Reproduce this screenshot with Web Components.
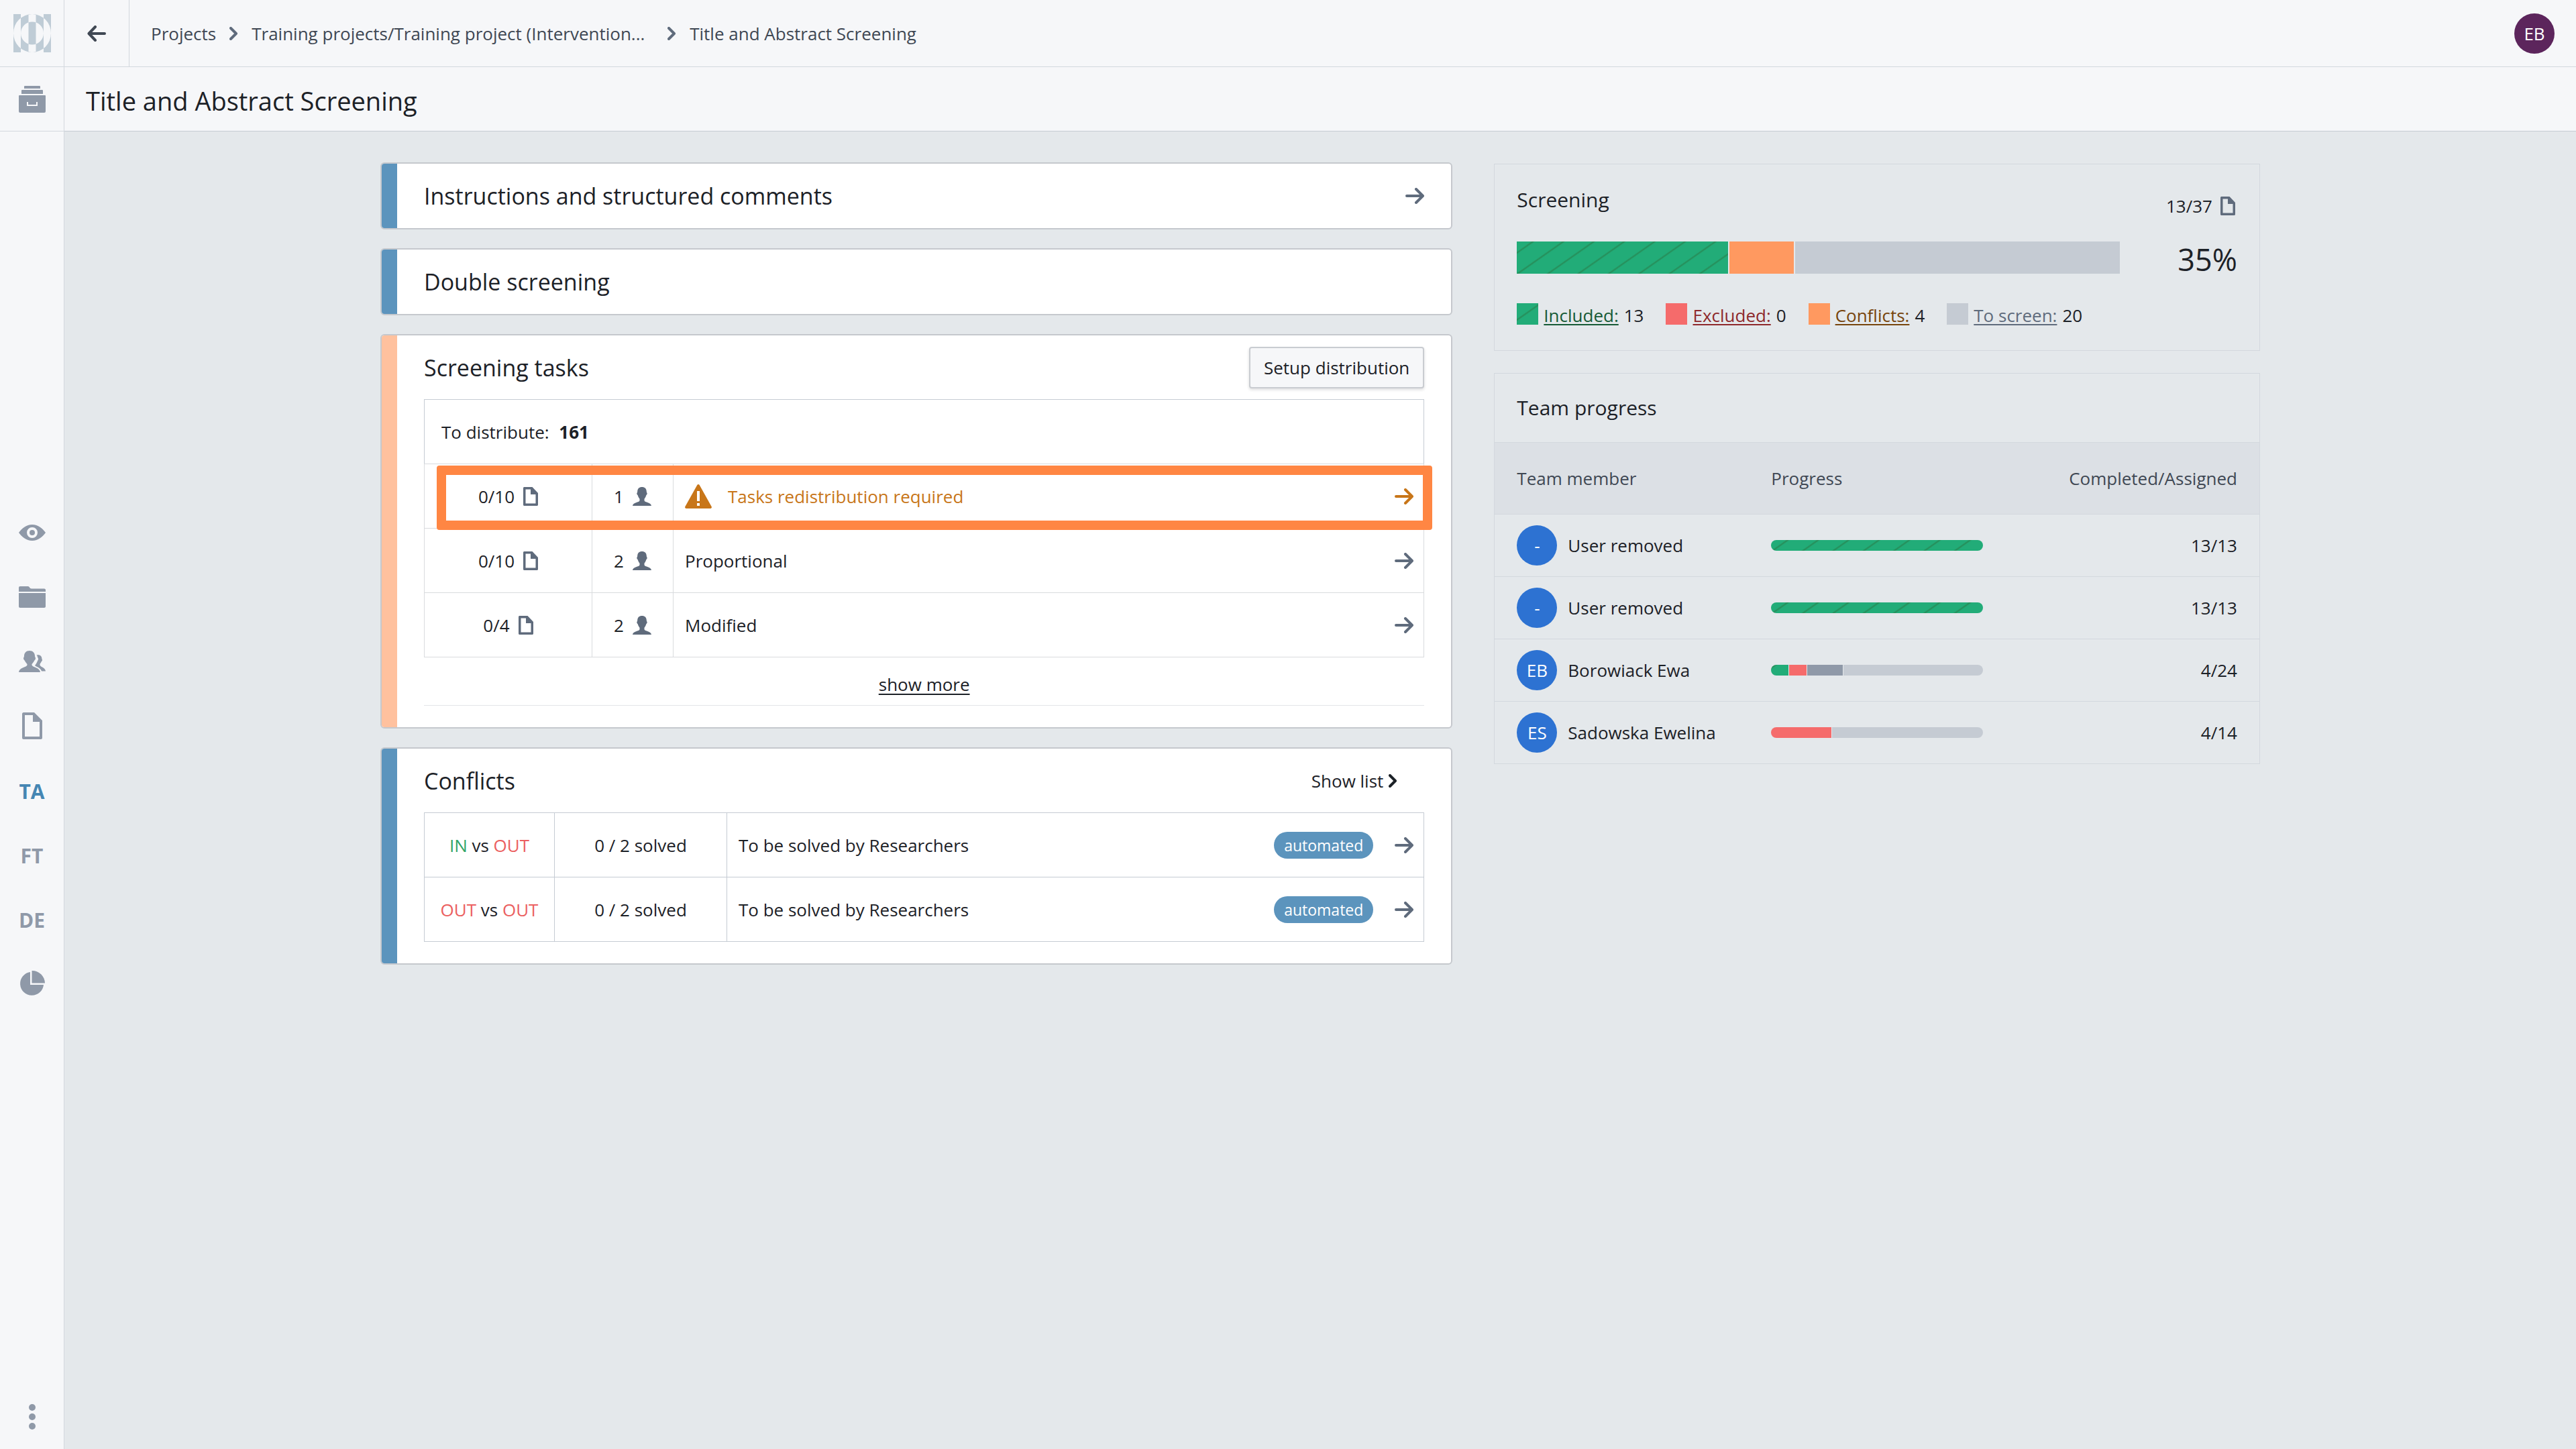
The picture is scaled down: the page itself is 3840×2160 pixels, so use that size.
<!DOCTYPE html>
<html lang="en">
<head>
<meta charset="utf-8">
<meta name="viewport" content="width=device-width, initial-scale=1">
<title>Title and Abstract Screening</title>
<style>
  html, body {
    margin: 0;
    height: 100%;
  }
  body {
    --bg: #e4e8eb;
    --panel: #f6f7f9;
    --line: #d3d8de;
    --text: #1c2127;
    --muted: #404854;
    --icon: #5f6b7c;
    --icon-light: #8f99a8;
    --blue: #5c94bd;
    --green: #22ac78;
    --red: #f56b6b;
    --orange: #ff9960;
    --grey: #c5cbd3;
    --warning: #c87619;
    background: var(--bg);
    color: var(--text);
    font-family: "Open Sans", "Noto Sans", sans-serif;
    font-size: 26px;
    line-height: 36px;
  }
</style>
</head>
<body>
<screening-app></screening-app>

<script>
class BaseElement extends HTMLElement {
  constructor() {
    super();
    this.attachShadow({ mode: "open" });
  }
  connectedCallback() {
    const template = document.createElement("template");
    template.innerHTML = `<style>${this.getStyles()}</style>${this.getTemplate()}`;
    this.shadowRoot.replaceChildren(template.content.cloneNode(true));
  }
}

const ICONS = {
  logo: [56, 57, `<path fill-rule="evenodd" d="M0 0h11v57H0zM22.5 0h11v57h-11zM45 0h11v57H45zM28 0a28 28.5 0 0 1 0 57a28 28.5 0 0 1 0-57zM28 11.500a17 17 0 0 1 0 34a17 17 0 0 1 0-34z"/>`],
  archive: [40, 40, `<path d="M9 0h22a1 1 0 0 1 1 1v3H8V1a1 1 0 0 1 1-1zM5 6h30a1 1 0 0 1 1 1v5H4V7a1 1 0 0 1 1-1zM1 14h38a1 1 0 0 1 1 1v23a2 2 0 0 1-2 2H2a2 2 0 0 1-2-2V15a1 1 0 0 1 1-1z"/><path d="M13 24v5h14v-5" fill="none" stroke="#f6f7f9" stroke-width="2"/>`],
  back: [28, 24, `<path d="M3 12h23M12 2L2.500 12L12 22" fill="none" stroke="currentColor" stroke-width="4" stroke-linecap="round" stroke-linejoin="round"/>`],
  arrow: [28, 24, `<path d="M2 12h23M16 2l10 10l-10 10" fill="none" stroke="currentColor" stroke-width="4" stroke-linecap="round" stroke-linejoin="round"/>`],
  chevron: [13, 20, `<path d="M2 2l8 8l-8 8" fill="none" stroke="currentColor" stroke-width="4" stroke-linecap="round" stroke-linejoin="round"/>`],
  doc: [22, 28, `<path d="M13.500 0H1.500C.7 0 0 .7 0 1.500v25c0 .8.7 1.500 1.500 1.500h19c.8 0 1.500-.7 1.500-1.500V9zM18.500 24.500h-15v-21H11V11h7.500z"/>`],
  page: [30, 40, `<path d="M18 0H2C1 0 0 1 0 2v36c0 1 1 2 2 2h26c1 0 2-1 2-2V12zM26 36H4V4h12v10h10z"/>`],
  person: [28, 28, `<path transform="scale(1.750)" d="M8 0C5.600 0 4.100 1.500 4.100 4c0 .7-.5.900-.5 1.600s.5 1.100.8 1.400C4.700 8.500 5.800 9.700 6 10.200v1.300C5.600 13.200.3 12.800 0 16h16c-.3-3.200-5.600-2.800-6-4.500v-1.300c.2-.5 1.300-1.700 1.600-3.200.3-.3.8-.7.800-1.400s-.5-.9-.5-1.600C11.900 1.500 10.400 0 8 0z"/>`],
  warning: [40, 36, `<path d="M18.300 1a2 2 0 0 1 3.400 0l18 32.200A1.900 1.900 0 0 1 38 36H2a1.900 1.900 0 0 1-1.700-2.800zM18 10v15h4V10zM18 28v4h4v-4z" fill-rule="evenodd"/>`],
  eye: [40, 24, `<path fill-rule="evenodd" d="M20 0C11 0 4.500 6 0 12c4.500 6 11 12 20 12s15.500-6 20-12C35.500 6 29 0 20 0zM20 4a8 8 0 0 1 0 16a8 8 0 0 1 0-16z"/><circle cx="20" cy="12" r="4"/>`],
  folder: [40, 32, `<path d="M2 0h12c1.500 0 2.500 3.500 5 3.500h19c1 0 2 .8 2 2V8H0V2C0 .8.800 0 2 0zM0 10h40v20c0 1.200-.8 2-2 2H2c-1.200 0-2-.8-2-2z"/>`],
  people: [40, 32, `<path d="M16 0c-5 0-8 3.500-8 8 0 1.500-1 2-1 3.500S8.300 14 9 15c1 2.500 3 4 3.500 5v1.500C11 25 .5 25 0 32h32c-.5-7-11-7-12.500-10.500V20c.5-1 2.500-2.500 3.500-5 .7-1 2-2 2-3.500S24 9.500 24 8c0-4.500-3-8-8-8z"/><path d="M26.500 6.500c4-1 7.500.8 7.800 4.500 0 1.500.7 2 .7 3 0 1.200-.8 1.600-1.300 2.300-.7 1.700-1.700 2.700-2.200 3.700v1.500c1 3 8 3.500 8.500 9h-6c-1.500-5-7-6-10-8.500 2-2.500 3.500-5 4-7 1-1 1.500-3 .5-4.500-1-1.500-.5-3-2-4z"/>`],
  pie: [38, 38, `<path d="M16 2A17.500 17.500 0 1 0 36 21H16z"/><path d="M18.500 0v18.500H38A19 19 0 0 0 18.500 0z"/>`],
  dots: [10, 38, `<circle cx="5" cy="5" r="5"/><circle cx="5" cy="19" r="5"/><circle cx="5" cy="33" r="5"/>`]
};

class UiIcon extends BaseElement {
  getTemplate() {
    const [w, h, body] = ICONS[this.getAttribute("name")];
    return `<svg width="${w}" height="${h}" viewBox="0 0 ${w} ${h}" fill="currentColor" aria-hidden="true">${body}</svg>`;
  }
  getStyles() {
    return `
      :host { display: inline-flex; flex: none; }
      svg { display: block; }
    `;
  }
}
customElements.define("ui-icon", UiIcon);

class UserAvatar extends BaseElement {
  getTemplate() {
    return `<slot></slot>`;
  }
  getStyles() {
    return `
      :host {
        display: inline-flex;
        flex: none;
        align-items: center;
        justify-content: center;
        width: 60px;
        height: 60px;
        border-radius: 50%;
        background: var(--avatar, #2d72d2);
        color: #fff;
      }
    `;
  }
}
customElements.define("user-avatar", UserAvatar);

/* parts="included:13 conflicts:4 rest:20" */
class StackedBar extends BaseElement {
  getTemplate() {
    return this.getAttribute("parts").split(" ").map(part => {
      const [kind, amount] = part.split(":");
      return `<span class="${kind}" style="flex-grow:${amount}"></span>`;
    }).join("");
  }
  getStyles() {
    return `
      :host {
        display: flex;
        gap: 2px;
        height: 48px;
        overflow: hidden;
      }
      :host([small]) { height: 16px; gap: 1px; border-radius: 8px; }
      span { flex: 0 1 0; }
      .included { background: repeating-linear-gradient(-35deg, #22ac78 0 22px, #278c58 24px, #22ac78 26px); }
      .excluded { background: var(--red); }
      .conflicts { background: var(--orange); }
      .started { background: var(--icon-light); }
      .rest { background: var(--grey); }
    `;
  }
}
customElements.define("stacked-bar", StackedBar);

class AppSidebar extends BaseElement {
  getTemplate() {
    return `
      <a class="cell logo" href="#" aria-label="Home"><ui-icon name="logo"></ui-icon></a>
      <a class="cell top" href="#" aria-label="Archive"><ui-icon name="archive"></ui-icon></a>
      <nav>
        <a href="#" aria-label="Overview"><ui-icon name="eye"></ui-icon></a>
        <a href="#" aria-label="Folders"><ui-icon name="folder"></ui-icon></a>
        <a href="#" aria-label="Team"><ui-icon name="people"></ui-icon></a>
        <a href="#" aria-label="References"><ui-icon name="page"></ui-icon></a>
        <a href="#" class="stage active">TA</a>
        <a href="#" class="stage">FT</a>
        <a href="#" class="stage">DE</a>
        <a href="#" aria-label="Statistics"><ui-icon name="pie"></ui-icon></a>
      </nav>
      <button aria-label="More"><ui-icon name="dots"></ui-icon></button>
    `;
  }
  getStyles() {
    return `
      :host {
        display: flex;
        flex-direction: column;
        box-sizing: border-box;
        width: 96px;
        background: var(--panel);
        border-right: 1px solid var(--line);
      }
      a, button {
        display: flex;
        align-items: center;
        justify-content: center;
        box-sizing: border-box;
        height: 96px;
        color: var(--icon-light);
        text-decoration: none;
        font-size: 30px;
        font-weight: 700;
      }
      button { border: 0; padding: 0; background: none; }
      .cell { border-bottom: 1px solid var(--line); }
      .logo { height: 100px; color: #bfccd6; }
      nav { flex: 1; display: flex; flex-direction: column; justify-content: center; }
      .stage { padding-top: 4px; }
      .active { color: #4586b3; }
    `;
  }
}
customElements.define("app-sidebar", AppSidebar);

class AppHeader extends BaseElement {
  getTemplate() {
    return `
      <a class="back" href="#" aria-label="Back"><ui-icon name="back"></ui-icon></a>
      <nav>
        <a href="#">Projects</a>
        <ui-icon name="chevron"></ui-icon>
        <a href="#" class="project">Training projects/Training project (Intervention...</a>
        <ui-icon name="chevron"></ui-icon>
        <a href="#">Title and Abstract Screening</a>
      </nav>
      <user-avatar>EB</user-avatar>
    `;
  }
  getStyles() {
    return `
      :host {
        display: flex;
        align-items: center;
        box-sizing: border-box;
        height: 100px;
        padding-right: 32px;
        background: var(--panel);
        border-bottom: 1px solid var(--line);
      }
      a { color: var(--muted); text-decoration: none; }
      .back {
        display: flex;
        align-items: center;
        justify-content: center;
        align-self: stretch;
        width: 96px;
        border-right: 1px solid var(--line);
      }
      nav { flex: 1; display: flex; align-items: center; gap: 20px; padding-left: 32px; }
      nav ui-icon { color: var(--icon); }
      .project { min-width: 600px; }
      user-avatar { --avatar: #5c255c; }
    `;
  }
}
customElements.define("app-header", AppHeader);

class PageTitle extends BaseElement {
  getTemplate() {
    return `<h1><slot></slot></h1>`;
  }
  getStyles() {
    return `
      :host {
        display: flex;
        align-items: center;
        box-sizing: border-box;
        height: 96px;
        padding: 4px 32px 0;
        background: var(--panel);
        border-bottom: 1px solid #c5cbd3;
      }
      h1 { margin: 0; font-size: 38px; font-weight: 400; line-height: 48px; }
    `;
  }
}
customElements.define("page-title", PageTitle);

class SectionCard extends BaseElement {
  getTemplate() {
    return `
      <div class="strip"></div>
      <section>
        <header><h2>${this.getAttribute("heading")}</h2><slot name="action"></slot></header>
        <slot></slot>
      </section>
    `;
  }
  getStyles() {
    return `
      :host {
        display: flex;
        border: 2px solid #c5c8cd;
        border-radius: 6px;
        background: #fff;
      }
      .strip { width: 23px; border-radius: 4px 0 0 4px; background: var(--strip, var(--blue)); }
      section { flex: 1; min-width: 0; padding: 0 40px; }
      header { display: flex; align-items: center; justify-content: space-between; height: 96px; }
      h2 { margin: 0; font-size: 34px; font-weight: 400; line-height: 44px; }
    `;
  }
}
customElements.define("section-card", SectionCard);

class ScreeningTasks extends BaseElement {
  getRow(done, people, label, warn) {
    return `
      <tr class="${warn ? "warn" : ""}">
        <td><div class="center">${done} <ui-icon name="doc"></ui-icon></div></td>
        <td><div class="center">${people} <ui-icon name="person"></ui-icon></div></td>
        <td>
          <div class="task">
            ${warn ? `<ui-icon name="warning"></ui-icon>` : ""}
            <span>${label}</span>
            <a href="#" aria-label="Open ${label}"><ui-icon name="arrow"></ui-icon></a>
          </div>
          ${warn ? `<div class="highlight"></div>` : ""}
        </td>
      </tr>
    `;
  }
  getTemplate() {
    return `
      <table>
        <colgroup><col class="c1"><col class="c2"><col></colgroup>
        <tr class="total"><td colspan="3">To distribute: <b>161</b></td></tr>
        ${this.getRow("0/10", 1, "Tasks redistribution required", true)}
        ${this.getRow("0/10", 2, "Proportional")}
        ${this.getRow("0/4", 2, "Modified")}
      </table>
      <div class="more"><a href="#">show more</a></div>
    `;
  }
  getStyles() {
    return `
      :host { display: block; padding-bottom: 32px; }
      table { width: 100%; margin-top: -1px; border-collapse: collapse; table-layout: fixed; }
      .c1 { width: 250px; }
      .c2 { width: 121px; }
      tr { height: 96px; position: relative; }
      td { box-sizing: border-box; padding: 0; border: 1px solid #d9dbde; }
      .total td { padding: 0 25px; border-color: #c5cbd3; border-bottom-color: #d9dbde; }
      b { margin-left: 8px; }
      .center, .task { display: flex; align-items: center; }
      .center { justify-content: center; gap: 13px; }
      .center ui-icon { color: var(--icon); }
      .task { gap: 24px; padding: 0 15px 0 17px; }
      .task span { flex: 1; }
      .task a { display: flex; color: var(--icon); }
      .warn .task, .warn .task a { color: var(--warning); }
      /* frame drawn over the row that needs attention */
      .highlight {
        position: absolute;
        inset: 2px -12px -2px 18px;
        border: 14px solid #ff8643;
        border-radius: 4px;
        pointer-events: none;
      }
      .more {
        display: flex;
        align-items: center;
        justify-content: center;
        box-sizing: border-box;
        height: 72px;
        padding-top: 8px;
        border-bottom: 1px solid #e3e5e8;
      }
      .more a { color: var(--text); text-underline-offset: 4px; text-decoration-thickness: 2px; }
    `;
  }
}
customElements.define("screening-tasks", ScreeningTasks);

class ConflictsTable extends BaseElement {
  getRow(first) {
    return `
      <tr>
        <td class="center"><span class="${first.toLowerCase()}">${first}</span> vs <span class="out">OUT</span></td>
        <td class="center">0 / 2 solved</td>
        <td>
          <div class="task">
            <span class="label">To be solved by Researchers</span>
            <span class="badge">automated</span>
            <a href="#" aria-label="Open conflict"><ui-icon name="arrow"></ui-icon></a>
          </div>
        </td>
      </tr>
    `;
  }
  getTemplate() {
    return `
      <table>
        <colgroup><col class="c1"><col class="c2"><col></colgroup>
        ${this.getRow("IN")}
        ${this.getRow("OUT")}
      </table>
    `;
  }
  getStyles() {
    return `
      :host { display: block; padding-bottom: 32px; }
      table { width: 100%; margin-top: -1px; border-collapse: collapse; table-layout: fixed; }
      .c1 { width: 194px; }
      .c2 { width: 257px; }
      tr { height: 96px; }
      td { box-sizing: border-box; padding: 0; border: 1px solid #c5cbd3; }
      .center { text-align: center; }
      .in { color: #32a467; }
      .out { color: #eb6060; }
      .task { display: flex; align-items: center; padding: 0 15px 0 17px; }
      .label { flex: 1; }
      .badge {
        padding: 0 15px;
        border-radius: 20px;
        background: var(--blue);
        color: #fff;
        font-size: 23px;
        line-height: 40px;
      }
      a { display: flex; margin-left: 32px; color: var(--icon); }
    `;
  }
}
customElements.define("conflicts-table", ConflictsTable);

class ScreeningSummary extends BaseElement {
  getTemplate() {
    return `
      <div class="left">
        <h2>Screening</h2>
        <stacked-bar parts="included:13 conflicts:4 rest:20"></stacked-bar>
        <ul>
          <li class="included"><i></i><a href="#">Included:</a>13</li>
          <li class="excluded"><i></i><a href="#">Excluded:</a>0</li>
          <li class="conflicts"><i></i><a href="#">Conflicts:</a>4</li>
          <li class="rest"><i></i><a href="#">To screen:</a>20</li>
        </ul>
      </div>
      <div class="right">
        <div class="count">13/37 <ui-icon name="doc"></ui-icon></div>
        <div class="percent">35%</div>
      </div>
    `;
  }
  getStyles() {
    return `
      :host {
        display: flex;
        padding: 33px 33px 34px;
        border: 1px solid var(--line);
      }
      .left { flex: 1; }
      h2 { margin: 0 0 42px; font-size: 30px; font-weight: 400; line-height: 40px; }
      ul { display: flex; gap: 33px; margin: 44px 0 0; padding: 0; list-style: none; }
      li { display: flex; gap: 8px; white-space: nowrap; }
      i { width: 32px; height: 32px; }
      a { text-underline-offset: 3px; text-decoration-thickness: 2px; }
      .included i { background: repeating-linear-gradient(-35deg, #22ac78 0 22px, #278c58 24px, #22ac78 26px); }
      .excluded i { background: var(--red); }
      .conflicts i { background: var(--orange); }
      .rest i { background: var(--grey); }
      .included a { color: #165a36; }
      .excluded a { color: #8e292c; }
      .conflicts a { color: #77450d; }
      .rest a { color: var(--icon); }
      .right { width: 175px; padding-top: 9px; }
      .count { display: flex; align-items: center; justify-content: flex-end; gap: 12px; padding-right: 3px; line-height: 40px; }
      .count ui-icon { color: var(--icon); }
      .percent { margin-top: 36px; font-size: 45px; line-height: 48px; text-align: right; }
    `;
  }
}
customElements.define("screening-summary", ScreeningSummary);

class TeamProgress extends BaseElement {
  getRow(initials, name, parts, total) {
    return `
      <tr>
        <td><div class="member"><user-avatar>${initials}</user-avatar>${name}</div></td>
        <td><stacked-bar small parts="${parts}"></stacked-bar></td>
        <td class="total">${total}</td>
      </tr>
    `;
  }
  getTemplate() {
    return `
      <h2>Team progress</h2>
      <table>
        <thead>
          <tr><th>Team member</th><th>Progress</th><th class="total">Completed/Assigned</th></tr>
        </thead>
        <tbody>
          ${this.getRow("-", "User removed", "included:13", "13/13")}
          ${this.getRow("-", "User removed", "included:13", "13/13")}
          ${this.getRow("EB", "Borowiack Ewa", "included:2 excluded:2 started:4 rest:16", "4/24")}
          ${this.getRow("ES", "Sadowska Ewelina", "excluded:4 rest:10", "4/14")}
        </tbody>
      </table>
    `;
  }
  getStyles() {
    return `
      :host { display: block; border: 1px solid var(--line); }
      h2 { margin: 0; padding: 0 33px; font-size: 30px; font-weight: 400; line-height: 102px; }
      table { width: 100%; border-collapse: collapse; table-layout: fixed; }
      th, td { padding: 0; text-align: left; font-weight: 400; }
      th { height: 106px; width: 316px; background: #dce0e5; color: var(--muted); border-top: 1px solid var(--line); }
      td { height: 92px; border-top: 1px solid var(--line); }
      th:first-child, td:first-child { width: 379px; padding-left: 33px; }
      th:last-child { width: auto; }
      .total { padding-right: 33px; text-align: right; }
      .member { display: flex; align-items: center; gap: 16px; }
    `;
  }
}
customElements.define("team-progress", TeamProgress);

class ScreeningApp extends BaseElement {
  getTemplate() {
    return `
      <app-sidebar></app-sidebar>
      <div class="page">
        <app-header></app-header>
        <page-title>Title and Abstract Screening</page-title>
        <main>
          <div class="column">
            <section-card heading="Instructions and structured comments">
              <a slot="action" class="arrow" href="#" aria-label="Open instructions"><ui-icon name="arrow"></ui-icon></a>
            </section-card>
            <section-card heading="Double screening"></section-card>
            <section-card class="tasks" heading="Screening tasks">
              <button slot="action">Setup distribution</button>
              <screening-tasks></screening-tasks>
            </section-card>
            <section-card heading="Conflicts">
              <a slot="action" class="list" href="#">Show list <ui-icon name="chevron"></ui-icon></a>
              <conflicts-table></conflicts-table>
            </section-card>
          </div>
          <div class="column side">
            <screening-summary></screening-summary>
            <team-progress></team-progress>
          </div>
        </main>
      </div>
    `;
  }
  getStyles() {
    return `
      :host { display: flex; min-height: 100vh; }
      .page { flex: 1; min-width: 0; }
      main {
        display: grid;
        grid-template-columns: minmax(0, 7fr) minmax(0, 5fr);
        align-items: start;
        gap: 62px;
        max-width: 2802px;
        margin: 0 auto;
        padding: 46px 32px;
      }
      .column { display: flex; flex-direction: column; gap: 28px; }
      .side { gap: 33px; padding-top: 2px; }
      .tasks { --strip: #ffc19e; }
      .arrow { display: flex; color: var(--icon); }
      .list {
        display: flex;
        align-items: center;
        gap: 8px;
        padding-right: 40px;
        color: var(--text);
        text-decoration: none;
      }
      button {
        height: 62px;
        padding: 0 20px;
        border: 2px solid #c9ccd1;
        border-radius: 4px;
        background: var(--panel);
        box-shadow: 0 2px 4px rgba(17, 20, 24, 0.15);
        color: var(--text);
        font: inherit;
      }
    `;
  }
}
customElements.define("screening-app", ScreeningApp);
</script>
</body>
</html>
